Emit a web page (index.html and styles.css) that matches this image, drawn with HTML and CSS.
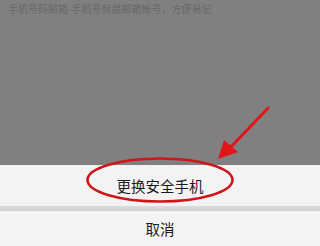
FILE: index.html
```html
<!DOCTYPE html>
<html lang="zh">
<head>
<meta charset="utf-8">
<link rel="stylesheet" href="styles.css">
</head>
<body>
<div class="screen">
  <div class="overlay">
    <p class="hint">手机号码邮箱-手机号就是邮箱帐号，方便易记</p>
  </div>
  <div class="sheet">
    <div class="action primary">更换安全手机</div>
    <div class="divider"></div>
    <div class="action">取消</div>
  </div>
  <svg class="annot" width="320" height="246" viewBox="0 0 320 246">
    <ellipse cx="160" cy="180" rx="72.5" ry="21.5" fill="none" stroke="#d0151a" stroke-width="2.6"/>
    <line x1="268" y1="108" x2="230" y2="148" stroke="#e0161b" stroke-width="3" stroke-linecap="round"/>
    <polygon points="218,159 224,140 238,152" fill="#e0161b"/>
  </svg>
</div>
</body>
</html>
```
FILE: styles.css
```css
html, body {
  margin: 0;
  padding: 0;
}
body {
  width: 320px;
  height: 246px;
  overflow: hidden;
  font-family: "Noto Sans CJK SC", "Noto Sans", sans-serif;
}
.screen {
  position: relative;
  width: 320px;
  height: 246px;
  display: flex;
  flex-direction: column;
}
.overlay {
  height: 165px;
  background: #808080;
  flex: none;
}
.hint {
  margin: 0;
  padding: 2px 0 0 8px;
  font-size: 10px;
  line-height: 14px;
  color: #686868;
  white-space: nowrap;
}
.sheet {
  flex: 1;
  display: flex;
  flex-direction: column;
  background: #f3f3f3;
}
.action {
  display: flex;
  align-items: center;
  justify-content: center;
  font-size: 14.5px;
  color: #1a1a1a;
  flex: 1;
}
.action.primary {
  height: 41px;
  flex: none;
}
.divider {
  height: 5px;
  background: linear-gradient(#dcdcdc, #cfcfcf);
  flex: none;
}
.annot {
  position: absolute;
  left: 0;
  top: 0;
  pointer-events: none;
}
```
